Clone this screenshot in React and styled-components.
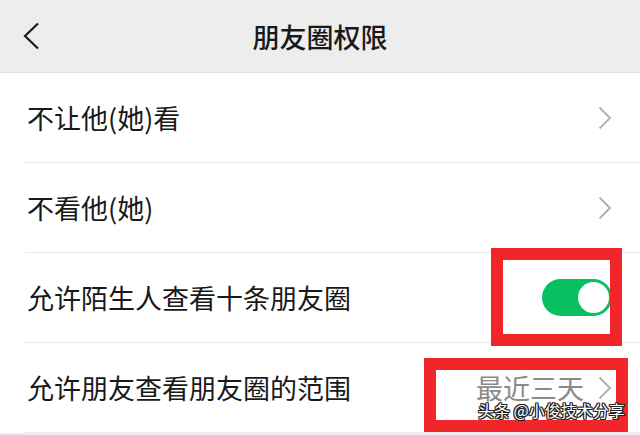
import React from "react";
import styled, { createGlobalStyle } from "styled-components";

const Global = createGlobalStyle`
  html, body { margin: 0; padding: 0; }
  body {
    width: 640px;
    height: 435px;
    overflow: hidden;
    background: #ededed;
    font-family: "Noto Sans CJK SC", "Noto Sans", sans-serif;
  }
`;

const Page = styled.div`
  position: relative;
  width: 640px;
  height: 435px;
  background: #ededed;
  overflow: hidden;
`;

const Header = styled.header`
  height: 72px;
  border-bottom: 1px solid #e2e2e2;
  background: #ededed;
  display: grid;
  grid-template-columns: 80px 1fr 80px;
  align-items: center;
`;

const BackButton = styled.div`
  display: flex;
  align-items: center;
  padding-left: 23px;
  height: 100%;
`;

const Title = styled.h1`
  margin: 0;
  text-align: center;
  font-size: 27px;
  font-weight: 500;
  color: #191919;
  letter-spacing: 0;
  line-height: 1;
  padding-top: 1px;
`;

const List = styled.div`
  background: #ffffff;
`;

const Row = styled.div`
  height: 89px;
  margin-left: 25px;
  padding-left: 2px;
  padding-right: 28px;
  border-bottom: 1px solid ${(p) => (p.$last ? "#ededed" : "#e8e8e8")};
  display: flex;
  align-items: center;
  justify-content: space-between;
`;

const Label = styled.span`
  font-size: 27px;
  color: #191919;
  line-height: 1;
`;

const Right = styled.div`
  display: flex;
  align-items: center;
  gap: 14px;
`;

const Value = styled.span`
  font-size: 27px;
  color: #8a8a8a;
  line-height: 1;
`;

const Switch = styled.div`
  width: 70px;
  height: 37px;
  border-radius: 19px;
  background: ${(p) => (p.$on ? "#07c160" : "#e5e5e5")};
  display: flex;
  align-items: center;
  justify-content: ${(p) => (p.$on ? "flex-end" : "flex-start")};
  padding: 0 1px;
  box-sizing: border-box;
`;

const Knob = styled.div`
  width: 35px;
  height: 35px;
  border-radius: 50%;
  background: #ffffff;
  box-sizing: border-box;
  border: 2px solid #07c160;
`;

const Mark = styled.div`
  position: absolute;
  left: ${(p) => p.$x}px;
  top: ${(p) => p.$y}px;
  width: ${(p) => p.$w}px;
  height: ${(p) => p.$h}px;
  box-sizing: border-box;
  border: 12px solid #f0262a;
  pointer-events: none;
`;

const Watermark = styled.div`
  position: absolute;
  left: 478px;
  top: 402px;
  font-size: 16px;
  line-height: 1;
  color: #ffffff;
  white-space: nowrap;
  text-shadow: 1px 1px 0 #222, -1px -1px 0 #222, 1px -1px 0 #222,
    -1px 1px 0 #222, 0 1px 0 #222, 0 -1px 0 #222, 1px 0 0 #222, -1px 0 0 #222;
`;

const Chevron = () => (
  <svg width="14" height="24" viewBox="0 0 14 24">
    <polyline
      points="1.5,1.5 12,12 1.5,22.5"
      fill="none"
      stroke="#b2b2b2"
      strokeWidth="2"
    />
  </svg>
);

const BackIcon = () => (
  <svg width="18" height="28" viewBox="0 0 18 28">
    <polyline
      points="15,1.5 2,14 15,26.5"
      fill="none"
      stroke="#191919"
      strokeWidth="2.2"
    />
  </svg>
);

export default function App() {
  return (
    <>
      <Global />
      <Page>
        <Header>
          <BackButton>
            <BackIcon />
          </BackButton>
          <Title>朋友圈权限</Title>
          <div />
        </Header>
        <List>
          <Row>
            <Label>不让他(她)看</Label>
            <Chevron />
          </Row>
          <Row>
            <Label>不看他(她)</Label>
            <Chevron />
          </Row>
          <Row>
            <Label>允许陌生人查看十条朋友圈</Label>
            <Switch $on>
              <Knob />
            </Switch>
          </Row>
          <Row $last>
            <Label>允许朋友查看朋友圈的范围</Label>
            <Right>
              <Value>最近三天</Value>
              <Chevron />
            </Right>
          </Row>
        </List>
        <Mark $x={491} $y={248} $w={131} $h={98} />
        <Mark $x={424} $y={358} $w={204} $h={74} />
        <Watermark>头条 @小俊技术分享</Watermark>
      </Page>
    </>
  );
}
